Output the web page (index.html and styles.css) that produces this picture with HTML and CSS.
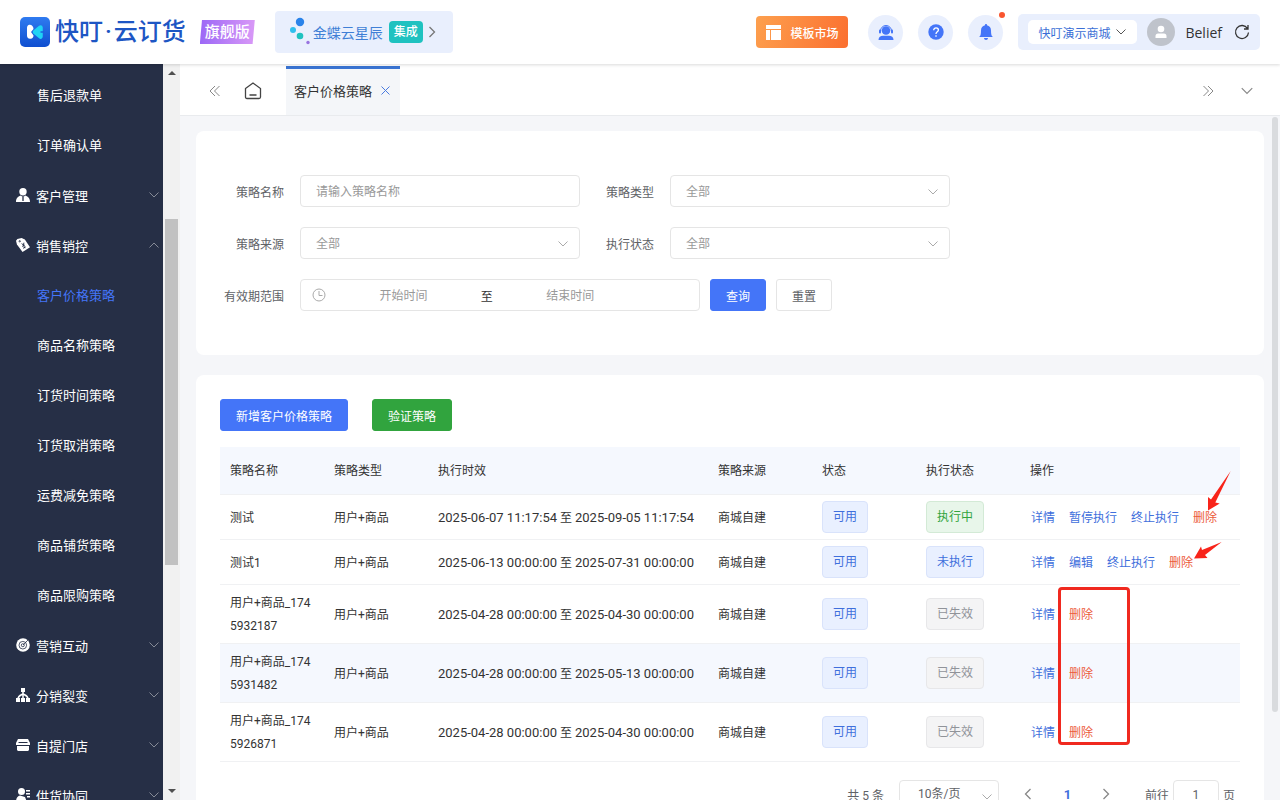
FILE: index.html
```
<!DOCTYPE html>
<html lang="zh-CN">
<head>
    <meta charset="UTF-8">
    <meta name="viewport" content="width=device-width, initial-scale=1.0">
    <title>客户价格策略</title>
    <link rel="stylesheet" href="styles.css">
</head>
<body>
    <svg class="sprite" aria-hidden="true">
        <symbol id="down" viewBox="0 0 12 12"><path d="M1.5 3.5 6 8l4.500-4.500" fill="none" stroke="currentColor"/></symbol>
        <symbol id="right" viewBox="0 0 12 12"><path d="M3.500 1 8.500 6l-5 5" fill="none" stroke="currentColor" stroke-width="1.300"/></symbol>
        <symbol id="double-right" viewBox="0 0 12 12"><path d="M1.500 1 6.500 6l-5 5M6 1l5 5-5 5" fill="none" stroke="currentColor"/></symbol>
    </svg>

    <header class="header">
        <div class="logo">
            <svg width="30" height="30" viewBox="0 0 30 30">
                <defs>
                    <linearGradient id="logoBg" x1="0" y1="0" x2="0" y2="1">
                        <stop offset="0" stop-color="#2f7bf0"/>
                        <stop offset="1" stop-color="#0f4fd0"/>
                    </linearGradient>
                </defs>
                <rect width="30" height="30" rx="5" fill="url(#logoBg)"/>
                <path d="M8.500 8C11 7 13.500 9 13.500 12L11 15l2.500 3.500c0 1.800-1 3-3 3.300C8 22 7 20.500 7 18.500V11c0-1.500.5-2.500 1.500-3z" fill="#fff"/>
                <path d="M20.500 10.500 15 15l5.500 4.500z" fill="#1fd3f5" stroke="#1fd3f5" stroke-width="4.500" stroke-linejoin="round"/>
                <path d="M20.500 15h3.500" stroke="#1c60de" stroke-width="1.500"/>
            </svg>
            <span class="logo-text">快叮<i>·</i>云订货</span>
        </div>
        <span class="edition">旗舰版</span>
        <a class="integration" href="#">
            <svg width="22" height="30" viewBox="0 0 22 30">
                <circle cx="11" cy="5" r="4.200" fill="#2a83ea"/>
                <circle cx="4" cy="13" r="3" fill="#30bfee"/>
                <circle cx="11" cy="19" r="3.300" fill="#1fc2c0"/>
                <circle cx="19" cy="25.500" r="1.700" fill="#9873e0"/>
            </svg>
            <span>金蝶云星辰</span>
            <span class="badge">集成</span>
            <svg class="icon-12"><use href="#right"/></svg>
        </a>

        <div class="header-right">
            <button class="market" type="button">
                <svg width="15" height="15" viewBox="0 0 15 15" fill="#fff"><path d="M0 0h15v4H0zM0 5h4v10H0zM5 5h10v10H5z"/></svg>
                模板市场
            </button>
            <button class="round" type="button" aria-label="客服">
                <svg width="16" height="16" viewBox="0 0 16 16" fill="#4475f8">
                    <circle cx="8" cy="6.500" r="4.300"/>
                    <path d="M2.500 7a5.500 5.500 0 0 1 11 0" fill="none" stroke="#4475f8"/>
                    <rect x="1" y="5.500" width="2" height="4" rx="1"/>
                    <rect x="13" y="5.500" width="2" height="4" rx="1"/>
                    <path d="M0.500 16c0-3 2-4.300 4.500-4.300h6c2.500 0 4.500 1.300 4.500 4.300z"/>
                </svg>
            </button>
            <button class="round" type="button" aria-label="帮助">
                <svg width="16" height="16" viewBox="0 0 16 16">
                    <circle cx="8" cy="8" r="7.700" fill="#4475f8"/>
                    <path d="M5.700 6.200C5.700 3 10.400 3.200 10.400 6c0 1.800-2.400 1.900-2.400 4M8 11.300v1.400" fill="none" stroke="#fff" stroke-width="1.300"/>
                </svg>
            </button>
            <button class="round has-dot" type="button" aria-label="消息">
                <svg width="14" height="16" viewBox="0 0 14 16" fill="#4475f8">
                    <path d="M7 0c.8 0 1 .5 1 1.200C10.500 1.700 12 3.700 12 6.500c0 4 .5 5.500 2 6.500H0c1.500-1 2-2.500 2-6.500 0-2.800 1.500-4.800 4-5.300C6 .5 6.200 0 7 0zM5 14h4c0 2.500-4 2.500-4 0z"/>
                </svg>
            </button>
            <div class="account">
                <button class="shop" type="button">快叮演示商城 <svg class="icon-12"><use href="#down"/></svg></button>
                <svg class="avatar" width="28" height="28" viewBox="0 0 28 28">
                    <circle cx="14" cy="14" r="14" fill="#bfc3cb"/>
                    <circle cx="14" cy="11" r="3.300" fill="#fff"/>
                    <path d="M8.500 20v-2c0-1.500 1-2.500 2.500-2.500h6c1.500 0 2.500 1 2.500 2.500v2z" fill="#fff"/>
                </svg>
                <span class="user">Belief</span>
                <svg width="16" height="16" viewBox="0 0 16 16" fill="none" stroke="#333" stroke-width="1.300"><path d="M13.500 4.500A6.500 6.500 0 1 0 14.500 8.500M14 1v4h-4"/></svg>
            </div>
        </div>
    </header>

    <div class="layout">
        <aside class="sidebar">
            <nav class="menu">
                <a class="sub" href="#">售后退款单</a>
                <a class="sub" href="#">订单确认单</a>
                <a class="group" href="#">
                    <svg width="14" height="14" viewBox="0 0 14 14" fill="#fff"><circle cx="7" cy="3.700" r="3.700"/><path d="M0 14c0-4 2-5.500 4.500-6.500L7 9l2.500-1.500C12 8.500 14 10 14 14z"/><path d="M7 9v4" stroke="#262f46" stroke-width="1.300"/></svg>
                    客户管理
                    <svg class="icon-12 arrow"><use href="#down"/></svg>
                </a>
                <a class="group" href="#">
                    <svg width="14" height="14" viewBox="0 0 15 15" fill="#fff"><path d="M0 3 1.500 1 6 0l3.500 1.500L15 10l-8 5-6-8z"/><g stroke="#262f46" fill="none"><circle cx="4" cy="3.500" r=".7"/><path d="m6 6 2 1.500.5-2.500M8 7.500 9.500 11M6.500 9l3-1.500M7.500 11l3-1.500"/></g></svg>
                    销售销控
                    <svg class="icon-12 arrow open"><use href="#down"/></svg>
                </a>
                <a class="sub active" href="#">客户价格策略</a>
                <a class="sub" href="#">商品名称策略</a>
                <a class="sub" href="#">订货时间策略</a>
                <a class="sub" href="#">订货取消策略</a>
                <a class="sub" href="#">运费减免策略</a>
                <a class="sub" href="#">商品铺货策略</a>
                <a class="sub" href="#">商品限购策略</a>
                <a class="group" href="#">
                    <svg width="14" height="14" viewBox="0 0 14 14"><circle cx="7" cy="7" r="6.800" fill="#fff"/><g fill="none" stroke="#262f46" stroke-width=".8"><circle cx="6.800" cy="7.200" r="3.800"/><circle cx="6.800" cy="7.200" r="1.500"/><path d="m7 7 6-6"/></g></svg>
                    营销互动
                    <svg class="icon-12 arrow"><use href="#down"/></svg>
                </a>
                <a class="group" href="#">
                    <svg width="14" height="14" viewBox="0 0 14 14" fill="#fff"><path d="M5 0h4v4H5zM0 10h4v4H0zM5 10h4v4H5zM10 10h4v4h-4z"/><path d="M7 3v8M2 11c0-3 2-3.500 5-5 3 1.500 5 2 5 5" fill="none" stroke="#fff" stroke-width="1.500"/></svg>
                    分销裂变
                    <svg class="icon-12 arrow"><use href="#down"/></svg>
                </a>
                <a class="group" href="#">
                    <svg width="14" height="14" viewBox="0 0 14 14" fill="#fff"><path d="M2 1h10l2 4v2H0V5zM1 8h12v4l-1 1H2l-1-1z"/><path d="M2.500 4.500h9" stroke="#262f46"/></svg>
                    自提门店
                    <svg class="icon-12 arrow"><use href="#down"/></svg>
                </a>
                <a class="group" href="#">
                    <svg width="14" height="14" viewBox="0 0 14 14" fill="#fff"><circle cx="5.500" cy="3.500" r="3.500"/><path d="M0 14c0-4 1.500-6 4-6.500L9 9l2 5zM10 2h4v1.500h-4zM10 5h4v1.500h-4zM11 8h3v1.500h-3z"/></svg>
                    供货协同
                    <svg class="icon-12 arrow"><use href="#down"/></svg>
                </a>
            </nav>
            <div class="scrollbar">
                <span class="scroll-up"></span>
                <div class="track"><div class="thumb"></div></div>
                <span class="scroll-down"></span>
            </div>
        </aside>

        <main class="main">
            <div class="tabs">
                <svg class="icon-12 back"><use href="#double-right"/></svg>
                <svg class="home" width="18" height="18" viewBox="0 0 18 18" fill="none" stroke="#444" stroke-width="1.300"><path d="M1.500 6.500 9 1l7.500 5.500V15c0 1-.5 1.500-1.500 1.500H3c-1 0-1.500-.5-1.500-1.500zM5.500 13h7"/></svg>
                <a class="tab" href="#">客户价格策略
                    <svg width="9" height="9" viewBox="0 0 9 9" stroke="#4a7be0"><path d="m.5.5 8 8M8.500.5l-8 8"/></svg>
                </a>
                <div class="tabs-right">
                    <svg class="icon-12"><use href="#double-right"/></svg>
                    <svg width="14" height="14"><use href="#down"/></svg>
                </div>
            </div>

            <div class="content">
                <form class="card search">
                    <div class="row">
                        <label for="name">策略名称</label>
                        <input class="field" id="name" type="text" placeholder="请输入策略名称">
                        <label for="type">策略类型</label>
                        <div class="select">
                            <select class="field" id="type"><option>全部</option></select>
                            <svg class="icon-12"><use href="#down"/></svg>
                        </div>
                    </div>
                    <div class="row">
                        <label for="source">策略来源</label>
                        <div class="select">
                            <select class="field" id="source"><option>全部</option></select>
                            <svg class="icon-12"><use href="#down"/></svg>
                        </div>
                        <label for="state">执行状态</label>
                        <div class="select">
                            <select class="field" id="state"><option>全部</option></select>
                            <svg class="icon-12"><use href="#down"/></svg>
                        </div>
                    </div>
                    <div class="row">
                        <label for="start">有效期范围</label>
                        <div class="range">
                            <svg width="14" height="14" viewBox="0 0 14 14" fill="none" stroke="#aaa"><circle cx="7" cy="7" r="6"/><path d="M7 3v4.500h3.500"/></svg>
                            <input id="start" type="text" placeholder="开始时间">
                            <span>至</span>
                            <input type="text" placeholder="结束时间" aria-label="结束时间">
                        </div>
                        <button class="btn primary" type="button">查询</button>
                        <button class="btn" type="reset">重置</button>
                    </div>
                </form>

                <section class="card list">
                    <div class="toolbar">
                        <button class="btn primary" type="button">新增客户价格策略</button>
                        <button class="btn success" type="button">验证策略</button>
                    </div>

                    <div class="table-wrap">
                        <table>
                            <colgroup>
                                <col class="col"><col class="col"><col class="col-time"><col class="col"><col class="col"><col class="col"><col>
                            </colgroup>
                            <thead>
                                <tr><th>策略名称</th><th>策略类型</th><th>执行时效</th><th>策略来源</th><th>状态</th><th>执行状态</th><th>操作</th></tr>
                            </thead>
                            <tbody>
                                <tr>
                                    <td>测试</td>
                                    <td>用户+商品</td>
                                    <td><time>2025-06-07 11:17:54</time> 至 <time>2025-09-05 11:17:54</time></td>
                                    <td>商城自建</td>
                                    <td><span class="tag">可用</span></td>
                                    <td><span class="tag running">执行中</span></td>
                                    <td><div class="actions"><a href="#">详情</a><a href="#">暂停执行</a><a href="#">终止执行</a><a class="danger" href="#">删除</a></div></td>
                                </tr>
                                <tr>
                                    <td>测试1</td>
                                    <td>用户+商品</td>
                                    <td><time>2025-06-13 00:00:00</time> 至 <time>2025-07-31 00:00:00</time></td>
                                    <td>商城自建</td>
                                    <td><span class="tag">可用</span></td>
                                    <td><span class="tag">未执行</span></td>
                                    <td><div class="actions"><a href="#">详情</a><a href="#">编辑</a><a href="#">终止执行</a><a class="danger" href="#">删除</a></div></td>
                                </tr>
                                <tr>
                                    <td>用户+商品_1745932187</td>
                                    <td>用户+商品</td>
                                    <td><time>2025-04-28 00:00:00</time> 至 <time>2025-04-30 00:00:00</time></td>
                                    <td>商城自建</td>
                                    <td><span class="tag">可用</span></td>
                                    <td><span class="tag expired">已失效</span></td>
                                    <td><div class="actions"><a href="#">详情</a><a class="danger" href="#">删除</a></div></td>
                                </tr>
                                <tr class="hover">
                                    <td>用户+商品_1745931482</td>
                                    <td>用户+商品</td>
                                    <td><time>2025-04-28 00:00:00</time> 至 <time>2025-05-13 00:00:00</time></td>
                                    <td>商城自建</td>
                                    <td><span class="tag">可用</span></td>
                                    <td><span class="tag expired">已失效</span></td>
                                    <td><div class="actions"><a href="#">详情</a><a class="danger" href="#">删除</a></div></td>
                                </tr>
                                <tr>
                                    <td>用户+商品_1745926871</td>
                                    <td>用户+商品</td>
                                    <td><time>2025-04-28 00:00:00</time> 至 <time>2025-04-30 00:00:00</time></td>
                                    <td>商城自建</td>
                                    <td><span class="tag">可用</span></td>
                                    <td><span class="tag expired">已失效</span></td>
                                    <td><div class="actions"><a href="#">详情</a><a class="danger" href="#">删除</a></div></td>
                                </tr>
                            </tbody>
                        </table>

                        <!-- red marks over the delete links -->
                        <div class="mark-box"></div>
                        <svg class="mark-arrows" width="100" height="120" viewBox="0 0 100 120" fill="#f8241a">
                            <path d="M90.700 24 71 52.500 68 50v13.500l11.700-7-4.400-1z"/>
                            <path d="M81.700 95 62 103l-1-3.500-7 12 13.500-.5-2.500-3z"/>
                        </svg>
                    </div>

                    <div class="pagination">
                        <span class="total">共 5 条</span>
                        <div class="select">
                            <select class="field" aria-label="每页条数"><option>10条/页</option></select>
                            <svg class="icon-12"><use href="#down"/></svg>
                        </div>
                        <button class="page prev" type="button" aria-label="上一页"><svg class="icon-12"><use href="#right"/></svg></button>
                        <button class="page current" type="button">1</button>
                        <button class="page" type="button" aria-label="下一页"><svg class="icon-12"><use href="#right"/></svg></button>
                        <label for="jump">前往</label>
                        <input class="field" id="jump" type="text" value="1">
                        <span>页</span>
                    </div>
                </section>
                <div class="content-thumb"></div>
            </div>
        </main>
    </div>
</body>
</html>
```

FILE: styles.css
```
* {
    box-sizing: border-box;
}
body {
    margin: 0;
    height: 100vh;
    display: flex;
    flex-direction: column;
    overflow: hidden;
    font-family: Roboto, "Noto Sans CJK SC", sans-serif;
    font-size: 12px;
    color: #333;
    background: #f5f6f9;
}
a {
    text-decoration: none;
    color: inherit;
}
button, input, select {
    font: inherit;
    color: inherit;
}
button {
    border: none;
    padding: 0;
    background: none;
    cursor: pointer;
}
svg {
    flex: none;
}
.sprite {
    position: absolute;
    width: 0;
    height: 0;
}
.icon-12 {
    width: 12px;
    height: 12px;
}

/* header */
.header {
    flex: none;
    display: flex;
    align-items: center;
    height: 64px;
    padding: 0 20px;
    background: #fff;
    box-shadow: 0 1px 3px rgba(0, 0, 0, 0.15);
    z-index: 2;
}
.logo {
    display: flex;
    align-items: center;
    gap: 5px;
}
.logo-text {
    font-size: 24px;
    font-weight: 500;
    line-height: 32px;
    color: #1d56c4;
    white-space: nowrap;
}
.logo-text i {
    font-style: normal;
    padding: 0 2px;
}
.edition {
    margin-left: 14px;
    width: 55px;
    height: 24px;
    line-height: 24px;
    text-align: center;
    font-size: 15px;
    font-weight: 500;
    color: #fff;
    background: linear-gradient(90deg, #9c68f6, #d999f7);
    clip-path: polygon(4% 0, 100% 0, 96% 100%, 0 100%);
}
.integration {
    display: flex;
    align-items: center;
    margin-left: 20px;
    width: 178px;
    height: 42px;
    padding-left: 14px;
    font-size: 14px;
    color: #3f7fd6;
    background: #e9effd;
    border-radius: 4px;
    white-space: nowrap;
}
.integration svg:first-child {
    margin-right: 2px;
}
.integration .icon-12 {
    color: #777;
    margin-left: 3px;
}
.badge {
    margin-left: 6px;
    padding: 0 5px;
    line-height: 22px;
    font-size: 12px;
    font-weight: 500;
    color: #fff;
    background: #1fc2c0;
    border-radius: 4px;
}
.header-right {
    display: flex;
    align-items: center;
    margin-left: auto;
}
.market {
    display: flex;
    align-items: center;
    gap: 9px;
    height: 32px;
    padding: 0 10px;
    margin-right: 20px;
    font-weight: 500;
    color: #fff;
    background: linear-gradient(110deg, #fda04e, #fb6f30);
    border-radius: 4px;
}
.round {
    position: relative;
    display: flex;
    align-items: center;
    justify-content: center;
    width: 35px;
    height: 35px;
    margin-right: 15px;
    border-radius: 50%;
    background: #e9effd;
}
.has-dot::after {
    content: "";
    position: absolute;
    top: -3px;
    right: -2px;
    width: 6px;
    height: 6px;
    border-radius: 50%;
    background: #f9552f;
}
.account {
    display: flex;
    align-items: center;
    height: 36px;
    padding: 0 10px;
    background: #e9effd;
    border-radius: 5px;
}
.shop {
    display: flex;
    align-items: center;
    gap: 5px;
    height: 24px;
    padding: 0 10px;
    color: #3b6fd6;
    background: #fff;
    border-radius: 5px;
}
.shop svg {
    color: #555;
}
.avatar {
    margin: 0 10px;
}
.user {
    font-family: "Open Sans", sans-serif;
    font-size: 14px;
    margin-right: 12px;
}

/* sidebar */
.layout {
    flex: 1;
    min-height: 0;
    display: flex;
}
.sidebar {
    flex: none;
    display: flex;
    width: 180px;
}
.menu {
    flex: 1;
    padding-top: 5px;
    overflow: hidden;
    background: #262f46;
    color: #fff;
    font-size: 13px;
}
.menu a {
    display: flex;
    align-items: center;
    height: 50px;
}
.sub {
    padding-left: 37px;
}
.group {
    gap: 6px;
    padding: 2px 3px 0 16px;
}
.active {
    color: #4475f8;
}
.arrow {
    margin-left: auto;
    color: #868b97;
}
.open, .back, .prev svg {
    transform: rotate(180deg);
}
.scrollbar {
    width: 17px;
    display: flex;
    flex-direction: column;
    align-items: center;
    background: #f1f1f1;
}
.scroll-up, .scroll-down {
    margin: 7px 0;
    border: 4px solid transparent;
}
.scroll-up {
    border-top: none;
    border-bottom-color: #505050;
}
.scroll-down {
    border-bottom: none;
    border-top-color: #505050;
}
.track {
    flex: 1;
    width: 13px;
    padding-top: 137px;
}
.thumb {
    height: 61.5%;
    background: #c1c1c1;
}

/* tabs */
.main {
    flex: 1;
    min-width: 0;
    display: flex;
    flex-direction: column;
}
.tabs {
    flex: none;
    display: flex;
    align-items: center;
    height: 52px;
    padding: 2px 26px 0 29px;
    background: #fff;
    border-bottom: 1px solid #e9ebee;
    color: #888;
}
.home {
    margin: 0 24px 0 23px;
}
.tab {
    display: flex;
    align-items: center;
    gap: 9px;
    height: 100%;
    padding: 0 10px 4px 8px;
    font-size: 13px;
    color: #333;
    background: #f4f6f9;
    border-top: 3px solid #3a74d2;
}
.tabs-right {
    display: flex;
    align-items: center;
    gap: 26px;
    margin-left: auto;
}

/* content */
.content {
    flex: 1;
    min-height: 0;
    position: relative;
    padding: 15px 16px 0;
    overflow: hidden;
}
.content-thumb {
    position: absolute;
    top: 1px;
    right: 2px;
    width: 6px;
    height: 87%;
    border-radius: 3px;
    background: #d9dbde;
}
.card {
    background: #fff;
    border-radius: 8px;
}
.search {
    display: flex;
    flex-direction: column;
    gap: 20px;
    padding: 44px 24px;
    margin-bottom: 20px;
}
.row {
    display: flex;
    align-items: center;
}
.row label {
    width: 80px;
    padding-right: 16px;
    text-align: right;
    color: #606266;
}
.field {
    width: 280px;
    height: 32px;
    padding: 2px 15px 0;
    color: #999;
    background: #fff;
    border: 1px solid #e5e5e5;
    border-radius: 4px;
    outline: none;
    appearance: none;
}
.row > .field, .row > .select, .range {
    margin-right: 10px;
}
::placeholder {
    color: #999;
    opacity: 1;
}
.select {
    position: relative;
}
.select svg {
    position: absolute;
    top: 11px;
    right: 11px;
    color: #aaa;
    pointer-events: none;
}
.range {
    display: flex;
    align-items: center;
    width: 400px;
    height: 32px;
    padding-left: 11px;
    border: 1px solid #e5e5e5;
    border-radius: 4px;
}
.range input {
    width: 40%;
    padding: 2px 0 0;
    border: none;
    outline: none;
    text-align: center;
}
.btn {
    height: 32px;
    padding: 0 15px;
    color: #606266;
    background: #fff;
    border: 1px solid #e5e5e5;
    border-radius: 3px;
}
.btn + .btn {
    margin-left: 10px;
}
.primary {
    color: #fff;
    background: #4475f8;
    border-color: #4475f8;
}
.success {
    color: #fff;
    background: #31a43e;
    border-color: #31a43e;
}
.list {
    padding: 24px;
}
.toolbar {
    display: flex;
    margin-bottom: 16px;
}
.toolbar .btn + .btn {
    margin-left: 24px;
}

/* table */
.table-wrap {
    position: relative;
}
table {
    width: 100%;
    table-layout: fixed;
    border-collapse: separate;
    border-spacing: 0;
}
.col {
    width: 104px;
}
.col-time {
    width: 280px;
}
th, td {
    padding: 7px 10px 5px;
    line-height: 23px;
    text-align: left;
    font-weight: 400;
    word-break: break-all;
    border-bottom: 1px solid #f0f1f3;
}
th {
    height: 48px;
    background: #f5f8fe;
}
time {
    font-size: 13px;
}
.hover td {
    background: #f5f8fe;
}
.tag {
    display: inline-block;
    height: 32px;
    line-height: 30px;
    margin: -1px 0 1px;
    padding: 0 10px;
    vertical-align: top;
    color: #3f6fdc;
    background: #e9f0ff;
    border: 1px solid #d9e3fb;
    border-radius: 4px;
}
.running {
    color: #31a43e;
    background: #e8f6ea;
    border-color: #d3ead6;
}
.expired {
    color: #909399;
    background: #f4f4f5;
    border-color: #e7e7e9;
}
.actions {
    display: flex;
    gap: 14px;
    padding-left: 1px;
    color: #3f6fdc;
    white-space: nowrap;
}
.danger {
    color: #ec5b3a;
}
.mark-box {
    position: absolute;
    top: 140px;
    left: 838px;
    width: 72px;
    height: 158px;
    border: 3px solid #f0291f;
    border-radius: 4px;
    pointer-events: none;
}
.mark-arrows {
    position: absolute;
    top: 0;
    left: 920px;
    pointer-events: none;
}

/* pagination */
.pagination {
    display: flex;
    align-items: center;
    justify-content: flex-end;
    margin-top: 18px;
    padding-right: 5px;
    color: #606266;
}
.total {
    margin-right: 15px;
}
.pagination .field {
    height: 28px;
    color: #606266;
}
.pagination .select {
    margin-right: 10px;
}
.pagination select {
    width: 100px;
    padding: 0 18px;
}
.pagination .select svg {
    right: 6px;
}
.page {
    display: flex;
    align-items: center;
    justify-content: center;
    width: 39px;
    height: 28px;
    color: #888;
}
.current {
    font-size: 13px;
    font-weight: 700;
    color: #3f6fdc;
}
.pagination label {
    margin: 0 4px 0 19px;
}
.pagination input {
    width: 46px;
    margin-right: 4px;
    text-align: center;
}
```
